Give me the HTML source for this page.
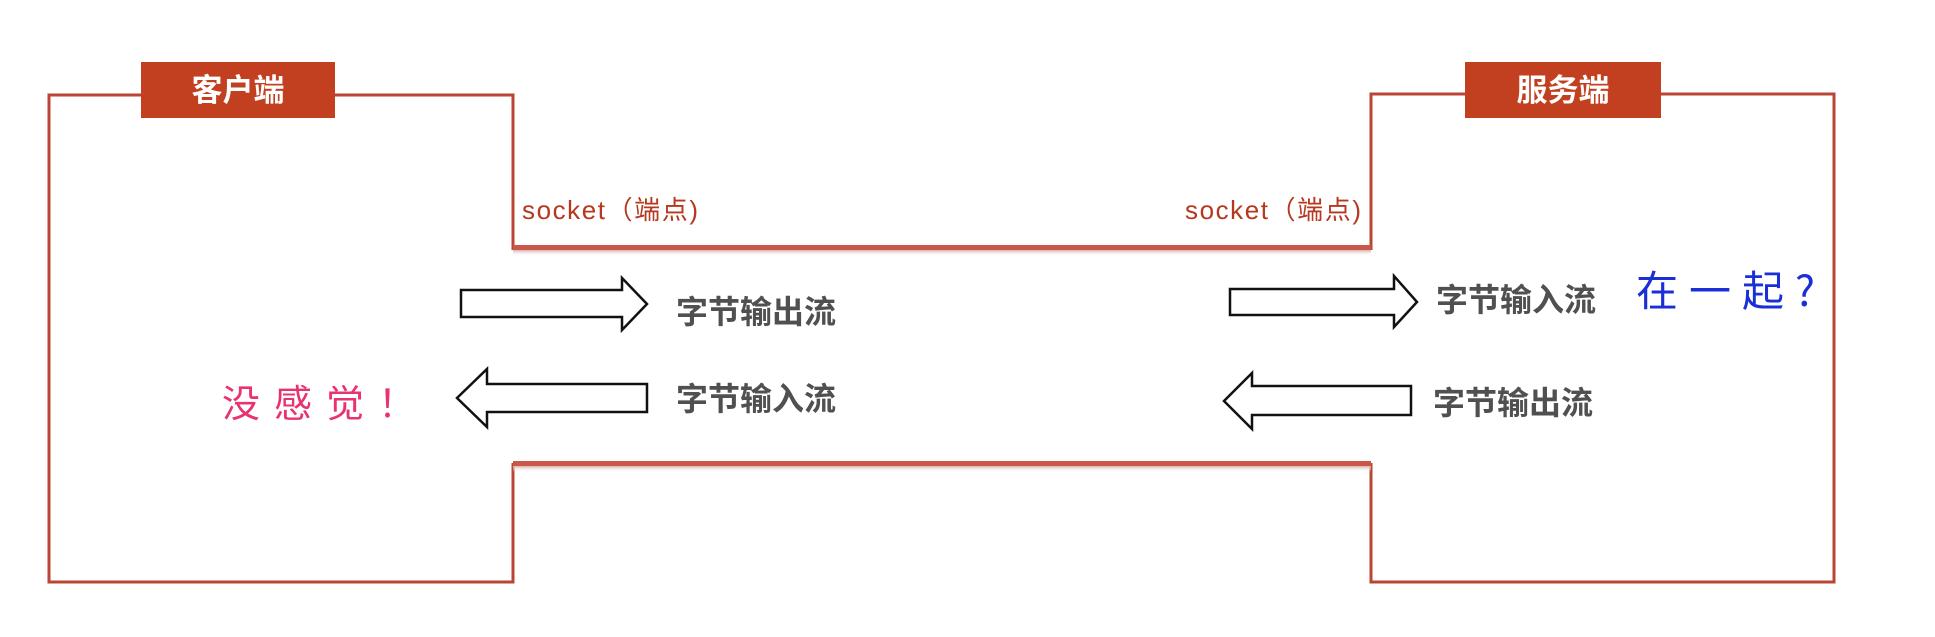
<!DOCTYPE html>
<html><head><meta charset="utf-8"><style>
html,body{margin:0;padding:0;background:#fff;width:1935px;height:637px;overflow:hidden}
svg{display:block}
</style></head><body>
<svg width="1935" height="637" viewBox="0 0 1935 637" xmlns="http://www.w3.org/2000/svg">
<defs>
<linearGradient id="sh" x1="0" y1="0" x2="0" y2="1"><stop offset="0" stop-color="#d9b0aa"/><stop offset="1" stop-color="#fff" stop-opacity="0"/></linearGradient>
</defs>
<g fill="none" stroke="#b84535" stroke-width="3">
<polyline points="513,250 513,95 49,95 49,582 513,582 513,463"/>
<polyline points="1371,250 1371,94 1834,94 1834,582 1371,582 1371,463"/>
</g>
<rect x="513" y="245" width="858" height="5" fill="#c9574a"/>
<rect x="513" y="250" width="858" height="6" fill="url(#sh)"/>
<rect x="513" y="461" width="858" height="5" fill="#c9574a"/>
<rect x="513" y="466" width="858" height="6" fill="url(#sh)"/>
<rect x="141" y="62" width="194" height="56" fill="#c2401f"/>
<rect x="1465" y="62" width="196" height="56" fill="#c2401f"/>
<g font-family="Liberation Sans, Noto Sans CJK SC, sans-serif" font-weight="bold" font-size="31" fill="#fff" text-anchor="middle">
<text x="238" y="101">客户端</text>
<text x="1563" y="101">服务端</text>
</g>
<g font-family="Liberation Sans, Noto Sans CJK SC, sans-serif" font-size="26" fill="#b5381f">
<text x="522" y="219" textLength="176">socket（端点)</text>
<text x="1185" y="219" textLength="176">socket（端点)</text>
</g>
<g fill="#fff" stroke="#111" stroke-width="2.5" stroke-linejoin="miter">
<polygon points="461,290 622,290 622,278 647,304 622,330 622,317 461,317"/>
<polygon points="647,384 487,384 487,369 457,398 487,427 487,412 647,412"/>
<polygon points="1230,289 1394,289 1394,276 1417,302 1394,327 1394,315 1230,315"/>
<polygon points="1411,386 1252,386 1252,373 1224,401 1252,429 1252,415 1411,415"/>
</g>
<g font-family="Liberation Sans, Noto Sans CJK SC, sans-serif" font-weight="bold" font-size="32" fill="#505050">
<text x="676" y="323">字节输出流</text>
<text x="676" y="410">字节输入流</text>
<text x="1436" y="311">字节输入流</text>
<text x="1433" y="414">字节输出流</text>
</g>
<text x="222" y="417" font-family="Noto Sans CJK SC, sans-serif" font-size="38" fill="#e8336f" letter-spacing="14">没感觉！</text>
<text x="1636" y="306" font-family="Noto Sans CJK SC, sans-serif" font-size="42" fill="#1a2fd6" letter-spacing="11">在一起?</text>
</svg>
</body></html>
